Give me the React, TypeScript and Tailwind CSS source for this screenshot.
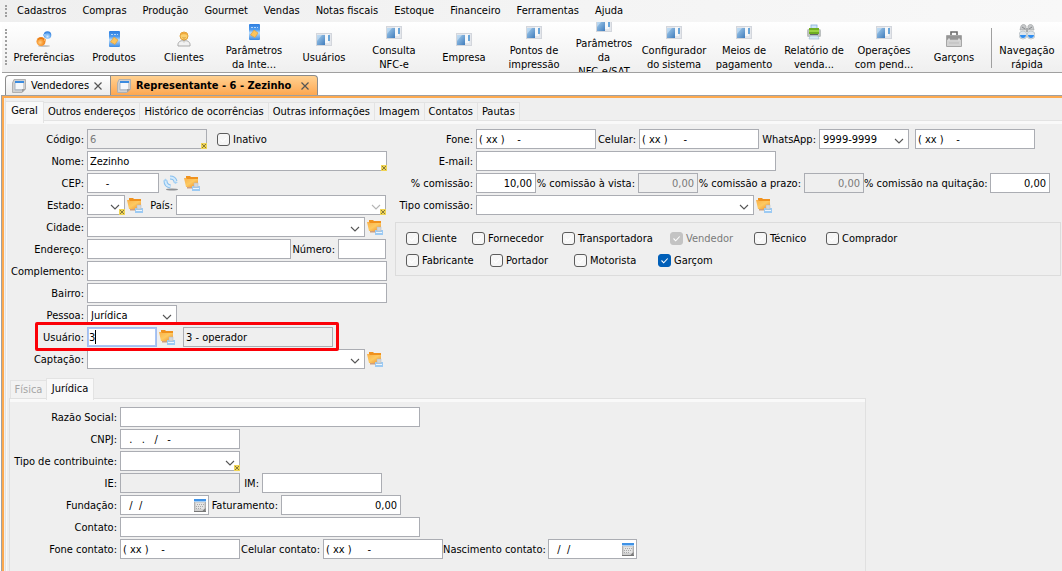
import React, { useId, useState } from "react";

/* ---------- Icons ---------- */

const WindowIcon = () => (
  <svg width="16" height="16" viewBox="0 0 16 16">
    <defs>
      <linearGradient id="winBlue" x1="0" y1="0" x2="1" y2="1">
        <stop offset="0" stopColor="#a9d0ef" />
        <stop offset="1" stopColor="#3f7cbc" />
      </linearGradient>
    </defs>
    <rect x="0" y="2" width="16" height="13" fill="#d3d6dc" />
    <rect x="1" y="3" width="14" height="11" fill="#e4e7ec" />
    <rect x="1" y="4" width="8" height="10" fill="url(#winBlue)" />
    <path d="M1 4h5L1 10z" fill="#cfe5f6" opacity=".6" />
    <rect x="9" y="3" width="4" height="9" fill="#f6f8fa" />
    <rect x="12" y="4" width="2" height="6" fill="#6aa5d8" />
  </svg>
);

const PreferencesIcon = () => (
  <svg width="16" height="16" viewBox="0 0 16 16">
    <defs>
      <radialGradient id="prefOrange" cx=".4" cy=".6" r=".6">
        <stop offset="0" stopColor="#ffd08a" />
        <stop offset=".5" stopColor="#f9a03c" />
        <stop offset="1" stopColor="#ee7f18" />
      </radialGradient>
      <radialGradient id="prefBlue" cx=".5" cy=".7" r=".6">
        <stop offset="0" stopColor="#d4eaff" />
        <stop offset=".6" stopColor="#6fb0f2" />
        <stop offset="1" stopColor="#3481de" />
      </radialGradient>
    </defs>
    <ellipse cx="8" cy="15" rx="6" ry="1" fill="#c4c4c4" />
    <circle cx="11.500" cy="4" r="3.800" fill="url(#prefBlue)" />
    <rect x="7" y="3" width="3" height="2" fill="#8fc2f5" />
    <circle cx="5" cy="10.500" r="4.500" fill="url(#prefOrange)" />
    <path d="M2 8.500c1.500-1.500 4.500-1.500 6 0" stroke="#e4750f" fill="none" />
    <rect x="8" y="8" width="2" height="2" fill="#f6b364" />
  </svg>
);

const BookIcon = () => (
  <svg width="16" height="16" viewBox="0 0 16 16">
    <defs>
      <linearGradient id="book" x1="0" y1="0" x2="0" y2="1">
        <stop offset="0" stopColor="#2f7fe0" />
        <stop offset=".35" stopColor="#4f9cee" />
        <stop offset=".55" stopColor="#b8dcfb" />
        <stop offset="1" stopColor="#3c8be4" />
      </linearGradient>
    </defs>
    <rect x="3" y="0" width="11" height="16" rx="1" fill="url(#book)" />
    <path d="M5 3.500h7" stroke="#b5d6fa" strokeDasharray="2 1" />
    <path d="M8 6l4 3-3 4.500-4.500-2.500z" fill="#fbc45c" stroke="#e79a2c" strokeWidth=".6" />
  </svg>
);

const PersonIcon = () => (
  <svg width="16" height="16" viewBox="0 0 16 16">
    <path d="M2 15c-.5-4 2-5.500 6-5.500s6.500 1.500 6 5.500z" fill="#f1f1f1" stroke="#a9a9a9" />
    <path d="M6 10l2 2 2-2z" fill="#d4d4d4" />
    <circle cx="8" cy="5" r="4" fill="#fbd06f" stroke="#e0a03a" />
    <path d="M4.500 4C5 .8 11 .8 11.500 4 10 3 6 3 4.500 4z" fill="#f0a83a" />
    <path d="M6.500 6.500c1 .8 2 .8 3 0" stroke="#c98a2a" strokeWidth=".8" fill="none" />
  </svg>
);

const PrinterIcon = () => (
  <svg width="16" height="16" viewBox="0 0 16 16">
    <rect x="5" y="1" width="6" height="5" fill="#cfe5f9" stroke="#86aed4" strokeWidth=".8" />
    <rect x="1" y="5" width="14" height="8" rx="1.500" fill="#bcc0c0" />
    <rect x="3" y="4" width="10" height="6" fill="#6fae22" />
    <rect x="3" y="6" width="10" height="2" fill="#9bd544" />
    <rect x="4" y="10" width="8" height="1" fill="#5f6668" />
    <path d="M4 12h8l1 3H3z" fill="#d7e9f8" stroke="#9bb8d2" strokeWidth=".6" />
  </svg>
);

const BriefcaseIcon = () => (
  <svg width="16" height="16" viewBox="0 0 16 16">
    <path d="M5 4V1h6v3" fill="none" stroke="#6b6b6b" strokeWidth="1.600" />
    <rect x="0" y="4" width="16" height="12" rx="1" fill="#a6a6a6" />
    <rect x="1" y="5" width="14" height="3" fill="#959595" />
    <rect x="1" y="9" width="14" height="6" fill="#d2d2d2" />
    <path d="M3 7.500v2M13 7.500v2" stroke="#e6e6e6" strokeWidth="1.500" />
    <path d="M3 12h10" stroke="#bdbdbd" />
  </svg>
);

const BinocularsIcon = () => (
  <svg width="16" height="16" viewBox="0 0 16 16">
    <path d="M2 2c1-2 4-2 5 0v4H1zM14 2c-1-2-4-2-5 0v4h6z" fill="#c6c8ca" stroke="#a4a6a8" strokeWidth=".7" />
    <path d="M3 3l3 2M10 5l3-2" stroke="#85888b" />
    <rect x="7" y="4" width="2" height="4" fill="#a9abad" />
    <circle cx="4" cy="11" r="4" fill="#dfe6ec" stroke="#b5bbc0" strokeWidth=".7" />
    <circle cx="12" cy="11" r="4" fill="#dfe6ec" stroke="#b5bbc0" strokeWidth=".7" />
    <path d="M1 11h6c0 4-6 4-6 0zM9 11h6c0 4-6 4-6 0z" fill="#2f8df0" />
  </svg>
);

const PageIcon = () => (
  <svg width="14" height="14" viewBox="0 0 14 14">
    <path d="M2 .5h11.500v9.500l-3.500 3.500H.5v-9.500z" fill="#d0d0d0" stroke="#b0b0b0" />
    <rect x="3" y="2" width="9" height="2" fill="#3b8ce0" />
    <rect x="3" y="4" width="8" height="6" fill="#f5f8fb" />
    <path d="M3 4v7h7" fill="none" stroke="#a9b6c5" />
    <path d="M10 13.500v-3.500h3.500z" fill="#9c9c9c" />
  </svg>
);

const FolderIcon = () => (
  <svg width="16" height="16" viewBox="0 0 16 16">
    <defs>
      <linearGradient id="folder" x1="0" y1="0" x2="1" y2="1">
        <stop offset="0" stopColor="#f9b04a" />
        <stop offset=".5" stopColor="#fdca62" />
        <stop offset="1" stopColor="#f08c28" />
      </linearGradient>
    </defs>
    <path d="M2 1h4l1 1h7v4H2z" fill="#f0921e" />
    <path d="M0 3h2l1 1h11v8H2z" fill="url(#folder)" />
    <path d="M3 12h6v1.500H3z" fill="#cf9f7c" />
    <rect x="8" y="11" width="8" height="5" fill="#9ccaf3" />
    <rect x="10" y="8" width="4" height="4" fill="#d3d7db" stroke="#b3b8bd" strokeWidth=".5" />
    <rect x="9" y="13" width="6" height="1" fill="#eef6fd" />
  </svg>
);

const RefreshIcon = () => (
  <svg width="16" height="16" viewBox="0 0 16 16">
    <ellipse cx="9" cy="14.500" rx="6" ry="1" fill="#8d9094" />
    <path d="M2.500 6c0 3 2 5 5 5.500" fill="none" stroke="#86bfee" strokeWidth="4" />
    <path d="M7 2.500c3 0 5 1.500 5.500 4" fill="none" stroke="#86bfee" strokeWidth="4" />
    <path d="M2.500 6c0 3 2 5 5 5.500M7 2.500c3 0 5 1.500 5.500 4" fill="none" stroke="#d3eafc" strokeWidth="2" />
    <path d="M0 6l2.500-2.500L5 6zM10 7h5l-2.500 2z" fill="#a5d1f5" />
  </svg>
);

const CalendarIcon = () => (
  <svg width="12" height="13" viewBox="0 0 12 13">
    <rect x=".5" y=".5" width="11" height="12" fill="#cfcfcf" stroke="#b0b0b0" />
    <rect x="0" y="0" width="12" height="2" fill="#3f92e6" />
    <rect x="0" y="2" width="12" height="1" fill="#a8d0f6" />
    <rect x="2" y="4" width="8" height="6" fill="#e4e4e4" />
    <path d="M3 5.500h7M2 7.500h8M2 9.500h6" stroke="#a8a8a8" strokeDasharray="1 1" />
    <path d="M8 12.500l3.500-3.500v3.500z" fill="#7b7b7b" />
    <path d="M0 12.500h12" stroke="#777" />
  </svg>
);

const CloseIcon = () => (
  <svg width="8" height="8" viewBox="0 0 8 8">
    <path d="M.5 .5l7 7M7.500 .5l-7 7" stroke="#555" strokeWidth="1.200" />
  </svg>
);

/* Small yellow mark in the corner of a mandatory field */
const RequiredMark = () => (
  <svg className="absolute right-0 bottom-0 pointer-events-none" width="6" height="6" viewBox="0 0 6 6">
    <rect width="6" height="6" fill="#f0d455" />
    <path d="M1 1l4 4M5 1l-4 4" stroke="#857a3c" />
  </svg>
);

/* ---------- Form parts ---------- */

type FieldProps = {
  label?: string;
  name?: string;
  labelWidth?: string;
  width: string;
  value?: string;
  right?: boolean;
  disabled?: boolean;
  readOnly?: boolean;
  required?: boolean;
  focused?: boolean;
  date?: boolean;
};

const Label = ({ id, text, width }: { id: string; text: string; width?: string }) => (
  <label htmlFor={id} className={`shrink-0 whitespace-nowrap pt-[2px] pr-[3px] text-right ${width ?? ""}`}>
    {text}
  </label>
);

const Field = (props: FieldProps) => {
  const id = useId();
  const [value, setValue] = useState(props.value ?? "");
  const grey = props.disabled || props.readOnly;

  return (
    <>
      {props.label && <Label id={id} text={props.label} width={props.labelWidth} />}
      <div className={`relative h-5 shrink-0 ${props.width}`}>
        <input
          id={id}
          type="text"
          aria-label={props.label ? undefined : props.name}
          value={value}
          disabled={props.disabled}
          readOnly={props.readOnly}
          onChange={(e) => setValue(e.target.value)}
          className={`block h-5 w-full border whitespace-pre outline-none ${
            props.focused ? "border-[#a3bdee] ring-1 ring-inset ring-[#a9c6f5] px-px" : "border-[#abadb3] pr-[3px] pl-[2px]"
          } ${grey ? "bg-[#efefef]" : "bg-white"} ${props.disabled ? "text-[#7a7a7a]" : "text-black"} ${
            props.right ? "text-right" : ""
          }`}
        />
        {props.focused && <span className="absolute left-2 top-[3px] h-[14px] w-px bg-black" />}
        {props.required && <RequiredMark />}
        {props.date && (
          <button type="button" aria-label="Abrir calendário" className="absolute right-[3px] top-1">
            <CalendarIcon />
          </button>
        )}
      </div>
    </>
  );
};

type SelectProps = {
  label: string;
  labelWidth?: string;
  width: string;
  options?: string[];
  required?: boolean;
  pale?: boolean;
};

const Select = ({ label, labelWidth, width, options = [""], required, pale }: SelectProps) => {
  const id = useId();
  return (
    <>
      <Label id={id} text={label} width={labelWidth} />
      <div className={`relative h-5 shrink-0 ${width}`}>
        <select id={id} className="block h-5 w-full appearance-none border border-[#abadb3] bg-white px-[3px] pt-[2px] outline-none">
          {options.map((o) => (
            <option key={o}>{o}</option>
          ))}
        </select>
        <svg className="pointer-events-none absolute right-[5px] top-[9px]" width="10" height="6" viewBox="0 0 10 6">
          <path d="M1 1l4 4 4-4" fill="none" stroke={pale ? "#b5b5b5" : "#555"} strokeWidth="1.100" />
        </svg>
        {required && <RequiredMark />}
      </div>
    </>
  );
};

const Check = ({ label, width, checked, disabled }: { label: string; width?: string; checked?: boolean; disabled?: boolean }) => (
  <label className={`flex shrink-0 items-center gap-[3px] whitespace-nowrap ${width ?? ""} ${disabled ? "text-[#7a7a7a]" : ""}`}>
    <span className="relative size-[13px]">
      <input
        type="checkbox"
        defaultChecked={checked}
        disabled={disabled}
        className="peer block size-[13px] appearance-none rounded-[3px] border border-[#5c5c5c] bg-[#f6f6f6] checked:border-[#005fb8] checked:bg-[#005fb8] disabled:border-[#c3c3c3] disabled:bg-[#c3c3c3]"
      />
      <svg className="pointer-events-none absolute inset-0 hidden peer-checked:block" width="13" height="13" viewBox="0 0 13 13">
        <path d="M3.500 6.500l2.200 2.300 4-4.300" fill="none" stroke="#fff" strokeWidth="1.100" />
      </svg>
    </span>
    <span className="pt-[2px]">{label}</span>
  </label>
);

const SearchButton = () => (
  <button type="button" aria-label="Pesquisar" className="ml-[2px] h-4 w-4 shrink-0">
    <FolderIcon />
  </button>
);

const Row = ({ children }: { children: React.ReactNode }) => (
  <div className="relative flex h-5 items-center">{children}</div>
);

const Grip = ({ height }: { height: string }) => (
  <span className={`w-0 shrink-0 border-l-2 border-dotted border-[#a0a0a0] ${height}`} />
);

/* ---------- Data ---------- */

const menus = ["Cadastros", "Compras", "Produção", "Gourmet", "Vendas", "Notas fiscais", "Estoque", "Financeiro", "Ferramentas", "Ajuda"];

const tools = [
  { lines: ["Preferências"], Icon: PreferencesIcon },
  { lines: ["Produtos"], Icon: BookIcon },
  { lines: ["Clientes"], Icon: PersonIcon },
  { lines: ["Parâmetros", "da Inte..."], Icon: BookIcon },
  { lines: ["Usuários"], Icon: WindowIcon },
  { lines: ["Consulta", "NFC-e"], Icon: WindowIcon },
  { lines: ["Empresa"], Icon: WindowIcon },
  { lines: ["Pontos de", "impressão"], Icon: WindowIcon },
  { lines: ["Parâmetros", "da", "NFC-e/SAT"], Icon: WindowIcon },
  { lines: ["Configurador", "do sistema"], Icon: WindowIcon },
  { lines: ["Meios de", "pagamento"], Icon: WindowIcon },
  { lines: ["Relatório de", "venda..."], Icon: PrinterIcon },
  { lines: ["Operações", "com pend..."], Icon: WindowIcon },
  { lines: ["Garçons"], Icon: BriefcaseIcon },
];

const pages = ["Outros endereços", "Histórico de ocorrências", "Outras informações", "Imagem", "Contatos", "Pautas"];

const ToolButton = ({ lines, Icon }: { lines: string[]; Icon: React.FC }) => (
  <button type="button" className="flex h-[50px] w-[70px] shrink-0 flex-col items-center justify-center gap-1 overflow-hidden pt-[2px]">
    <span className="shrink-0">
      <Icon />
    </span>
    <span className="shrink-0 whitespace-nowrap leading-[14px]">
      {lines.map((l) => (
        <span key={l} className="block">
          {l}
        </span>
      ))}
    </span>
  </button>
);

/* ---------- Page ---------- */

const App = () => {
  return (
    <div className="flex min-h-screen flex-col overflow-hidden bg-white font-['DejaVu_Sans_Condensed','Noto_Sans',sans-serif] text-[11px] leading-[14px] text-black [&_svg]:block">
      {/* Menu */}
      <nav className="flex h-[22px] items-center bg-linear-to-r from-[#efefef] to-[#f8f8f8] pl-[5px]">
        <Grip height="h-3" />
        <div className="flex pl-[2px]">
          {menus.map((m) => (
            <button key={m} type="button" className="px-2 whitespace-nowrap">
              {m}
            </button>
          ))}
        </div>
      </nav>

      {/* Toolbar */}
      <div className="ml-[2px] flex h-[51px] items-start border-b border-[#a0a0a0] bg-linear-to-b from-white to-[#efefef] pl-[3px]">
        <div className="flex h-[50px] w-1 items-center">
          <Grip height="h-9" />
        </div>
        {tools.map((t) => (
          <ToolButton key={t.lines.join(" ")} {...t} />
        ))}
        <span className="ml-[2px] mt-[6px] h-10 w-px shrink-0 bg-[#a0a0a0]" />
        <ToolButton lines={["Navegação", "rápida"]} Icon={BinocularsIcon} />
      </div>

      {/* Open windows */}
      <div className="flex h-[22px] items-end pl-[5px]">
        <div className="flex h-5 items-center rounded-tl border border-b-0 border-[#8c8c8c] bg-linear-to-b from-white to-[#ececec] pr-1 pl-[6px]">
          <PageIcon />
          <button type="button" className="w-16 pl-[5px] text-left">Vendedores</button>
          <button type="button" aria-label="Fechar Vendedores" className="px-1">
            <CloseIcon />
          </button>
        </div>
        <div className="flex h-5 items-center rounded-tr border border-b-0 border-l-0 border-[#8c8c8c] bg-linear-to-b from-[#ffd191] to-[#fda74f] pr-1 pl-[6px]">
          <PageIcon />
          <button type="button" className="w-[166px] pl-[5px] text-left font-bold whitespace-nowrap">Representante - 6 - Zezinho</button>
          <button type="button" aria-label="Fechar Representante" className="px-1">
            <CloseIcon />
          </button>
        </div>
      </div>

      <main className="ml-px flex flex-1 flex-col border-t border-l border-[#a0a0a0] bg-[#efefef]">
        <div className="flex flex-1 flex-col border-t-2 border-l-2 border-[#fda94f] pl-px">
          {/* Page tabs */}
          <div className="flex h-[22px] items-end border-l border-[#e3e3e3]">
            <button type="button" className="relative z-10 -mb-[3px] h-[22px] w-[38px] border-t border-r border-[#e3e3e3] bg-[#f9f9f9] pb-1">
              Geral
            </button>
            {pages.map((p) => (
              <button key={p} type="button" className="h-[18px] border-t border-r border-[#e3e3e3] bg-[#f2f2f2] px-1 pt-px whitespace-nowrap">
                {p}
              </button>
            ))}
          </div>

          <div className="flex flex-1 flex-col border-t border-l border-[#e3e3e3]">
            <div className="h-[3px] bg-[#f9f9f9]" />
            <div className="flex flex-1 flex-col border-l border-[#f9f9f9] pt-[5px]">
              <div className="flex">
                <div className="flex w-[388px] shrink-0 flex-col gap-[2px]">
                  <Row>
                    <Field label="Código:" labelWidth="w-20" width="w-[120px]" value="6" disabled required />
                    <div className="pl-[10px]">
                      <Check label="Inativo" />
                    </div>
                  </Row>
                  <Row>
                    <Field label="Nome:" labelWidth="w-20" width="w-[300px]" value="Zezinho" required />
                  </Row>
                  <Row>
                    <Field label="CEP:" labelWidth="w-20" width="w-[72px]" value="     -" />
                    <button type="button" aria-label="Consultar CEP" className="ml-1 mr-[3px] w-4">
                      <RefreshIcon />
                    </button>
                    <SearchButton />
                  </Row>
                  <Row>
                    <Select label="Estado:" labelWidth="w-20" width="w-[38px]" required />
                    <SearchButton />
                    <Select label="País:" labelWidth="w-[33px]" width="w-[210px]" required pale />
                  </Row>
                  <Row>
                    <Select label="Cidade:" labelWidth="w-20" width="w-[278px]" />
                    <SearchButton />
                  </Row>
                  <Row>
                    <Field label="Endereço:" labelWidth="w-20" width="w-[204px]" />
                    <Field label="Número:" labelWidth="w-[47px]" width="w-[48px]" />
                  </Row>
                  <Row>
                    <Field label="Complemento:" labelWidth="w-20" width="w-[300px]" />
                  </Row>
                  <Row>
                    <Field label="Bairro:" labelWidth="w-20" width="w-[300px]" />
                  </Row>
                  <Row>
                    <Select label="Pessoa:" labelWidth="w-20" width="w-[90px]" options={["Jurídica", "Física"]} />
                  </Row>
                  <Row>
                    <Field label="Usuário:" labelWidth="w-20" width="w-[70px]" value="3" focused />
                    <SearchButton />
                    <div className="pl-2">
                      <Field name="Nome do usuário" width="w-[150px]" value="3 - operador" readOnly />
                    </div>
                    <span className="pointer-events-none absolute -top-[5px] -bottom-1 left-7 z-10 w-[304px] rounded-[2px] border-3 border-[#fb0007]" />
                  </Row>
                  <Row>
                    <Select label="Captação:" labelWidth="w-20" width="w-[278px]" />
                    <SearchButton />
                  </Row>
                </div>

                <div className="flex flex-1 flex-col gap-[2px] pr-px">
                  <Row>
                    <Field label="Fone:" labelWidth="w-[81px]" width="w-[120px]" value="( xx )    -" />
                    <Field label="Celular:" labelWidth="w-[43px]" width="w-[120px]" value="( xx )     -" />
                    <Select label="WhatsApp:" labelWidth="w-[60px]" width="w-[90px]" options={["9999-9999"]} />
                    <div className="pl-[6px]">
                      <Field name="Número do WhatsApp" width="w-[120px]" value="( xx )    -" />
                    </div>
                  </Row>
                  <Row>
                    <Field label="E-mail:" labelWidth="w-[81px]" width="w-[300px]" />
                  </Row>
                  <Row>
                    <Field label="% comissão:" labelWidth="w-[81px]" width="w-[60px]" value="10,00" right />
                    <Field label="% comissão à vista:" labelWidth="w-[102px]" width="w-[60px]" value="0,00" right disabled />
                    <Field label="% comissão a prazo:" labelWidth="w-[106px]" width="w-[60px]" value="0,00" right disabled />
                    <Field label="% comissão na quitação:" labelWidth="w-[126px]" width="w-[60px]" value="0,00" right />
                  </Row>
                  <Row>
                    <Select label="Tipo comissão:" labelWidth="w-[81px]" width="w-[278px]" />
                    <SearchButton />
                  </Row>
                  <div className="mt-[5px] flex flex-col gap-[2px] border border-[#dcdcdc] py-[5px] pl-[10px]">
                    <Row>
                      <Check label="Cliente" width="w-[66px]" />
                      <Check label="Fornecedor" width="w-[90px]" />
                      <Check label="Transportadora" width="w-[108px]" />
                      <Check label="Vendedor" width="w-[84px]" checked disabled />
                      <Check label="Técnico" width="w-[72px]" />
                      <Check label="Comprador" />
                    </Row>
                    <Row>
                      <Check label="Fabricante" width="w-[84px]" />
                      <Check label="Portador" width="w-[84px]" />
                      <Check label="Motorista" width="w-[84px]" />
                      <Check label="Garçom" checked />
                    </Row>
                  </div>
                </div>
              </div>

              {/* Física / Jurídica */}
              <div className="mt-2 flex max-w-[859px] flex-1 flex-col pl-[2px]">
                <div className="flex h-[21px] items-end">
                  <button type="button" disabled className="ml-px h-[18px] w-9 border-t border-l border-[#e3e3e3] bg-[#f2f2f2] text-[#a5a5a5]">
                    Física
                  </button>
                  <button type="button" className="relative z-10 -mb-[2px] h-[22px] w-12 border border-b-0 border-[#e3e3e3] bg-[#f9f9f9] pb-[2px]">
                    Jurídica
                  </button>
                </div>
                <div className="flex flex-1 flex-col border border-b-0 border-[#e0e0e0]">
                  <div className="h-[3px] bg-[#f9f9f9]" />
                  <div className="flex flex-col gap-[2px] pt-[5px]">
                    <Row>
                      <Field label="Razão Social:" labelWidth="w-[110px]" width="w-[300px]" />
                    </Row>
                    <Row>
                      <Field label="CNPJ:" labelWidth="w-[110px]" width="w-[120px]" value="  .   .   /   -" />
                    </Row>
                    <Row>
                      <Select label="Tipo de contribuinte:" labelWidth="w-[110px]" width="w-[120px]" required />
                    </Row>
                    <Row>
                      <Field label="IE:" labelWidth="w-[110px]" width="w-[120px]" disabled />
                      <Field label="IM:" labelWidth="w-[22px]" width="w-[120px]" />
                    </Row>
                    <Row>
                      <Field label="Fundação:" labelWidth="w-[110px]" width="w-[89px]" value="  /  /" date />
                      <Field label="Faturamento:" labelWidth="w-[72px]" width="w-[120px]" value="0,00" right />
                    </Row>
                    <Row>
                      <Field label="Contato:" labelWidth="w-[110px]" width="w-[300px]" />
                    </Row>
                    <Row>
                      <Field label="Fone contato:" labelWidth="w-[110px]" width="w-[120px]" value="( xx )    -" />
                      <Field label="Celular contato:" labelWidth="w-[83px]" width="w-[120px]" value="( xx )     -" />
                      <Field label="Nascimento contato:" labelWidth="w-[105px]" width="w-[89px]" value="  /  /" date />
                    </Row>
                  </div>
                </div>
              </div>
            </div>
          </div>
        </div>
      </main>
    </div>
  );
};

export default App;
